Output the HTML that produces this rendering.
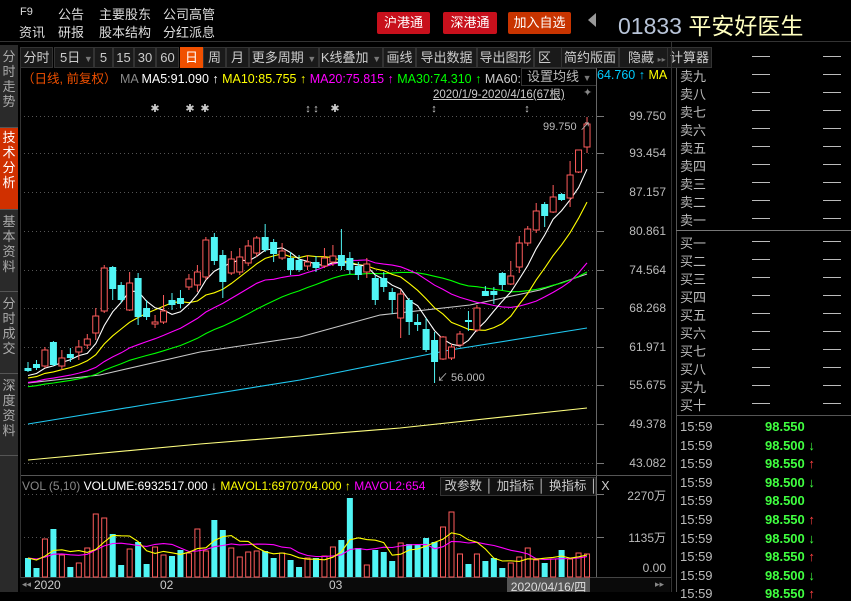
<!DOCTYPE html>
<html><head><meta charset="utf-8">
<style>
*{margin:0;padding:0;box-sizing:border-box}
body{width:851px;height:592px;background:#000;overflow:hidden;position:relative;font-family:"Liberation Sans","Noto Sans CJK SC",sans-serif;font-size:12px;color:#ccc}
.a{position:absolute;white-space:nowrap}
.hd{color:#ddd;font-size:13px}
.btn{position:absolute;top:12px;height:22px;color:#fff;font-size:13px;text-align:center;line-height:22px;border-radius:2px}
.tb{position:absolute;top:47px;height:21px;background:#1a1a1a;border:1px solid #333;color:#ccc;font-size:13px;line-height:19px;text-align:center}
.side{position:absolute;left:0;width:18px;background:#2a2a2a;color:#aaa;font-size:13px;line-height:15px;text-align:center;padding-top:4px;border-bottom:1px solid #555}
.rp{position:absolute;left:680px;color:#bbb;font-size:13px}
.dash{position:absolute;width:18px;height:1px;background:#bbb}
.pl{position:absolute;left:600px;width:66px;text-align:right;color:#bbb;font-size:12px}
.tr{position:absolute;left:680px;font-size:13px;font-weight:bold}
</style></head><body>
<div class="a hd" style="left:20px;top:6px;font-size:11px">F9</div>
<div class="a hd" style="left:58px;top:4px">公告</div>
<div class="a hd" style="left:99px;top:4px">主要股东</div>
<div class="a hd" style="left:163px;top:4px">公司高管</div>
<div class="a hd" style="left:19px;top:22px">资讯</div>
<div class="a hd" style="left:58px;top:22px">研报</div>
<div class="a hd" style="left:99px;top:22px">股本结构</div>
<div class="a hd" style="left:163px;top:22px">分红派息</div>
<div class="btn" style="left:377px;width:53px;background:#c8101c">沪港通</div>
<div class="btn" style="left:443px;width:54px;background:#c8101c">深港通</div>
<div class="btn" style="left:508px;width:63px;background:#c83400">加入自选</div>
<div class="a" style="left:588px;top:13px;width:0;height:0;border-top:7px solid transparent;border-bottom:7px solid transparent;border-right:8px solid #999"></div>
<div class="a" style="left:618px;top:7px;font-size:23px;color:#b8c4d8">01833 <span style="color:#ffffc0">平安好医生</span></div>
<div class="a" style="left:0;top:41px;width:851px;height:1px;background:#333"></div>

<div class="side" style="top:45px;height:83px">分<br>时<br>走<br>势</div>
<div class="side" style="top:128px;height:82px;background:#d03000;color:#fff;padding-top:2px">技<br>术<br>分<br>析</div>
<div class="side" style="top:210px;height:82px">基<br>本<br>资<br>料</div>
<div class="side" style="top:292px;height:82px">分<br>时<br>成<br>交</div>
<div class="side" style="top:374px;height:82px">深<br>度<br>资<br>料</div>
<div class="side" style="top:456px;height:136px;border:none"></div>

<div class="tb" style="left:20px;width:33px">分时</div>
<div class="tb" style="left:54px;width:40px;text-align:left;padding-left:5px">5日 <span style="color:#777;font-size:9px">▼</span></div>
<div class="tb" style="left:94px;width:19px">5</div>
<div class="tb" style="left:113px;width:21px">15</div>
<div class="tb" style="left:134px;width:22px">30</div>
<div class="tb" style="left:156px;width:23px">60</div>
<div class="tb" style="left:180px;width:23px;background:#f05000;color:#fff;border-color:#f05000">日</div>
<div class="tb" style="left:203px;width:23px">周</div>
<div class="tb" style="left:226px;width:23px">月</div>
<div class="tb" style="left:249px;width:70px">更多周期 <span style="color:#777;font-size:9px">▼</span></div>
<div class="tb" style="left:319px;width:64px">K线叠加 <span style="color:#777;font-size:9px">▼</span></div>
<div class="tb" style="left:383px;width:33px">画线</div>
<div class="tb" style="left:416px;width:61px">导出数据</div>
<div class="tb" style="left:477px;width:57px">导出图形</div>
<div class="tb" style="left:534px;width:28px;text-align:left;padding-left:3px">区间</div>
<div class="tb" style="left:561px;width:58px">简约版面</div>
<div class="tb" style="left:619px;width:49px;text-align:left;padding-left:8px">隐藏 <span style="color:#777;font-size:8px">▸▸</span></div>
<div class="tb" style="left:668px;width:44px;border-left:none;text-align:left;padding-left:2px">计算器</div>

<div class="a" style="left:22px;top:68px;font-size:12.5px"><span style="color:#f05000">（日线, 前复权）</span> <span style="color:#888">MA</span> <span style="color:#fff">MA5:91.090 ↑</span> <span style="color:#ff0">MA10:85.755 ↑</span> <span style="color:#f0f">MA20:75.815 ↑</span> <span style="color:#0f0">MA30:74.310 ↑</span> <span style="color:#ccc">MA60:73.</span></div>
<div class="a" style="left:521px;top:68px;width:76px;height:18px;background:#000;border:1px solid #333;color:#bbb;font-size:13px;padding-left:5px;line-height:16px">设置均线 <span style="color:#777;font-size:9px">▼</span></div>
<div class="a" style="left:597px;top:68px;font-size:12.5px;color:#0cf">64.760 ↑ <span style="color:#ff0">MA</span></div>
<div class="a" style="left:433px;top:86px;color:#ccc;font-size:11.5px;text-decoration:underline">2020/1/9-2020/4/16(67根)</div>
<div class="a" style="left:583px;top:86px;color:#888;font-size:11px">✦</div>

<svg class="a" style="left:0;top:0" width="851" height="592" id="sv"></svg>

<div class="pl" style="top:109px">99.750</div>
<div class="pl" style="top:146px">93.454</div>
<div class="pl" style="top:185px">87.157</div>
<div class="pl" style="top:224px">80.861</div>
<div class="pl" style="top:263px">74.564</div>
<div class="pl" style="top:301px">68.268</div>
<div class="pl" style="top:340px">61.971</div>
<div class="pl" style="top:378px">55.675</div>
<div class="pl" style="top:417px">49.378</div>
<div class="pl" style="top:456px">43.082</div>
<div class="a" style="left:543px;top:118px;color:#bbb;font-size:11px">99.750 ↗</div>
<div class="a" style="left:437px;top:369px;color:#bbb;font-size:11px">↙ 56.000</div>

<div class="a" style="left:22px;top:479px;font-size:12px"><span style="color:#888">VOL (5,10)</span> <span style="color:#fff">VOLUME:6932517.000 ↓</span> <span style="color:#ff0">MAVOL1:6970704.000 ↑</span> <span style="color:#f0f">MAVOL2:654</span></div>
<div class="a" style="left:440px;top:477px;width:156px;height:19px;border:1px solid #333;background:#111;color:#ccc;font-size:12.5px;line-height:17px">&nbsp;改参数 │ 加指标 │ 换指标 │ X</div>
<div class="pl" style="top:487px;font-size:12px">2270万</div>
<div class="pl" style="top:529px;font-size:12px">1135万</div>
<div class="pl" style="top:561px;font-size:12px">0.00</div>
<div class="a" style="left:20px;top:578px;width:650px;height:14px;background:#0a0a0a"></div>
<div class="a" style="left:22px;top:579px;color:#888;font-size:9px">◂◂</div>
<div class="a" style="left:34px;top:578px;color:#ccc;font-size:12px">2020</div>
<div class="a" style="left:160px;top:578px;color:#ccc;font-size:12px">02</div>
<div class="a" style="left:329px;top:578px;color:#ccc;font-size:12px">03</div>
<div class="a" style="left:507px;top:578px;width:83px;height:14px;background:#555;color:#ddd;font-size:12px;text-align:center">2020/04/16/四</div>
<div class="a" style="left:655px;top:579px;color:#888;font-size:9px">▸▸</div>

<div class="a" style="left:671px;top:42px;width:1px;height:550px;background:#333"></div>
<div class="a" style="left:676px;top:68px;width:1px;height:524px;background:#555"></div>
<div class="a" style="left:676px;top:230px;width:175px;height:1px;background:#777"></div>
<div class="a" style="left:676px;top:415px;width:175px;height:1px;background:#555"></div>
<div id="rp"></div>
<script>
var sv=document.getElementById('sv'),h='';
function L(x1,y1,x2,y2,c,d){h+='<line x1="'+x1+'" y1="'+y1+'" x2="'+x2+'" y2="'+y2+'" stroke="'+c+'" stroke-width="1"'+(d?' stroke-dasharray="1,3"':'')+'/>';}
function P(pts,c){h+='<polyline fill="none" stroke="'+c+'" stroke-width="1.1" points="'+pts.map(function(p){return p[0].toFixed(1)+','+p[1].toFixed(1)}).join(' ')+'"/>';}
[116,153,192,231,270,308,347,385,424,463,537].forEach(function(y){L(20,y+.5,596,y+.5,'#555',1);L(596,y+.5,604,y+.5,'#777')});
L(20,494.5,596,494.5,'#555',1);L(596,494.5,604,494.5,'#777');
L(596.5,68,596.5,578,'#666');L(20,475.5,671,475.5,'#555');L(20,577.5,671,577.5,'#444');
L(20.5,68,20.5,592,'#333');
var C=[[368,371,362,372,0],[364,368,360,370,0],[350,366,347,368,1],[342,365,341,366,0],[358,366,350,370,1],[354,358,348,362,0],[347,352,340,360,1],[339,345,334,349,1],[316,333,308,340,1],[268,311,265,313,1],[267,289,266,300,0],[285,300,282,303,0],[283,310,272,311,1],[278,317,273,325,0],[308,317,300,320,0],[322,324,315,328,1],[311,322,295,324,1],[300,305,293,310,0],[298,304,290,308,0],[279,287,274,290,1],[272,285,265,292,1],[240,277,237,280,1],[237,261,233,265,0],[255,282,250,298,0],[259,273,251,275,1],[257,272,248,275,1],[246,263,240,266,1],[238,253,236,257,1],[237,250,224,252,0],[242,254,239,262,0],[251,258,243,260,1],[258,270,252,275,0],[260,270,255,272,0],[262,266,255,270,1],[262,268,256,272,0],[258,266,248,268,1],[256,262,245,266,1],[255,266,229,270,0],[258,270,252,274,0],[266,275,262,280,0],[264,272,258,278,1],[278,300,275,305,0],[278,287,272,292,0],[292,300,288,314,0],[294,318,290,338,1],[300,322,298,335,0],[322,325,314,331,0],[329,350,318,352,0],[340,362,332,383,0],[337,359,336,360,1],[347,358,344,360,1],[334,345,331,346,1],[320,322,311,331,0],[308,330,305,332,1],[291,296,286,296,0],[291,295,287,304,0],[273,285,272,290,0],[276,284,261,285,1],[243,267,236,273,1],[229,243,226,246,1],[211,230,203,233,1],[204,216,202,227,0],[197,212,185,213,1],[194,200,193,201,0],[175,198,161,207,1],[150,172,150,173,1],[124,147,117,153,1]];
var V=[558,568,539,529,555,567,563,548,514,518,534,565,549,542,564,547,555,556,550,553,529,551,520,530,548,557,552,551,551,558,553,560,567,558,558,556,547,540,498,548,565,550,552,561,543,544,545,538,542,527,512,554,564,554,561,558,568,563,557,548,560,563,559,550,559,553,554];
function X(i){return 28+i*8.47;}
var R='#ff5c5c',B='#50f5f5';
var closes=[];for(var k=0;k<30;k++)closes.push(400-k*0.85);
C.forEach(function(c){closes.push(c[4]?c[0]:c[1]);});
function ma(n,arr,off){var o=[];for(var i=0;i<67;i++){var s=0;for(var j=0;j<n;j++)s+=arr[off+i-j];o.push([X(i),s/n]);}return o;}
P([[28,460],[200,444],[400,428],[587,408]],'#ffff80');
P([[28,424],[150,404],[300,380],[450,350],[587,328]],'#20c8f0');
P([[28,383],[100,375],[200,352],[300,337],[380,315],[470,305],[540,290],[587,274]],'#c8c8c8');
P(ma(30,closes,30),'#00ff00');P(ma(20,closes,30),'#ff00ff');P(ma(10,closes,30),'#ffff00');P(ma(5,closes,30),'#ffffff');
C.forEach(function(c,i){var x=X(i),col=c[4]?R:B;L(x,c[2],x,c[3],col);
 var hh=Math.max(c[1]-c[0],1.5);
 if(c[4])h+='<rect x="'+(x-3)+'" y="'+c[0]+'" width="6" height="'+hh+'" fill="#000" stroke="'+col+'" stroke-width="1"/>';
 else h+='<rect x="'+(x-3.5)+'" y="'+c[0]+'" width="7" height="'+hh+'" fill="'+col+'"/>';
 var col2=c[4]?R:B;
 if(c[4])h+='<rect x="'+(x-2.5)+'" y="'+V[i]+'" width="5" height="'+(577-V[i])+'" fill="none" stroke="'+col2+'"/>';
 else h+='<rect x="'+(x-3)+'" y="'+V[i]+'" width="6" height="'+(577-V[i])+'" fill="'+col2+'"/>';
});
var VV=[];for(k=0;k<10;k++)VV.push(558);VV=VV.concat(V);
P(ma(10,VV,10),'#ff00ff');P(ma(5,VV,10),'#ffff00');
[155,190,205,335].forEach(function(x){h+='<text x="'+x+'" y="112" fill="#ccc" font-size="11" text-anchor="middle">✱</text>';});
[308,316,434,527].forEach(function(x){h+='<text x="'+x+'" y="112" fill="#ccc" font-size="11" text-anchor="middle">↕</text>';});
sv.innerHTML=h;
var rp='',s=['卖九','卖八','卖七','卖六','卖五','卖四','卖三','卖二','卖一'],b=['买一','买二','买三','买四','买五','买六','买七','买八','买九','买十'];
rp+='<div class="dash" style="left:752px;top:56px"></div><div class="dash" style="left:823px;top:56px"></div>';
s.forEach(function(t,i){var y=66+i*18;rp+='<div class="rp" style="top:'+y+'px">'+t+'</div><div class="dash" style="left:752px;top:'+(y+8)+'px"></div><div class="dash" style="left:823px;top:'+(y+8)+'px"></div>';});
b.forEach(function(t,i){var y=233+i*18;rp+='<div class="rp" style="top:'+y+'px">'+t+'</div><div class="dash" style="left:752px;top:'+(y+8)+'px"></div><div class="dash" style="left:823px;top:'+(y+8)+'px"></div>';});
var p=['98.550','98.500','98.550','98.500','98.500','98.550','98.500','98.550','98.500','98.550'],a=['','d','u','d','','u','d','u','d','u'];
p.forEach(function(v,i){var y=419+i*18.6;rp+='<div class="tr" style="top:'+y+'px;color:#bbb;font-weight:normal">15:59</div><div class="tr" style="left:765px;top:'+y+'px;color:#40ff40">'+v+(a[i]=='d'?' <span style="color:#40ff40">↓</span>':a[i]=='u'?' <span style="color:#ff4040">↑</span>':'')+'</div>';});
document.getElementById('rp').innerHTML=rp;
</script>
</body></html>
